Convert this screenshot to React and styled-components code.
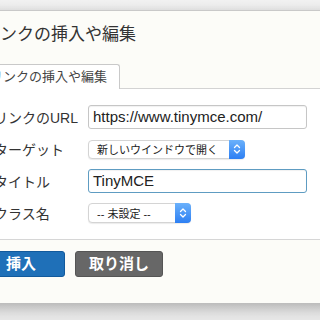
import React from "react";
import styled, { createGlobalStyle } from "styled-components";

const Global = createGlobalStyle`
    html, body {
        margin: 0;
        padding: 0;
        background: #efefef;
        overflow: hidden;
    }
    #root {
        width: 320px;
        height: 320px;
        overflow: hidden;
        background: linear-gradient(to bottom, #f3f3f3, #e9e9e9);
    }
`;

const font = `"Liberation Sans", "Noto Sans CJK JP", sans-serif`;

const Dialog = styled.div`
    margin: 10px 0 0 -30px;
    width: 380px;
    background: #fcfcf8;
    border-top: 1px solid #c9c9c9;
    box-shadow: 0 4px 14px rgba(0, 0, 0, 0.28);
    font-family: ${font};
    color: #333;
`;

const Title = styled.div`
    padding: 13px 0 0 13px;
    height: 40px;
    font-size: 17px;
    line-height: 22px;
    box-sizing: border-box;
`;

const TabBar = styled.div`
    display: flex;
    margin-top: 13px;
    padding-left: 7px;
    border-bottom: 1px solid #d3d3d3;
`;

const Tab = styled.div`
    margin-bottom: -1px;
    padding: 0 12px;
    height: 25px;
    line-height: 24px;
    font-size: 13px;
    color: #444;
    background: #fff;
    border: 1px solid #c9c9c9;
    border-bottom: none;
    border-radius: 3px 3px 0 0;
    box-sizing: border-box;
`;

const Body = styled.div`
    background: #fff;
    padding: 16px 0 14px 24px;
    display: flex;
    flex-direction: column;
    gap: 8px;
`;

const Row = styled.div`
    display: grid;
    grid-template-columns: 94px 1fr;
    align-items: center;
    height: 24px;
`;

const Label = styled.div`
    font-size: 14px;
    color: #333;
`;

const Input = styled.div`
    width: 219px;
    height: 24px;
    box-sizing: border-box;
    border: 1px solid ${({ focus }) => (focus ? "#5e9cc2" : "#c6c6c6")};
    border-radius: 3px;
    padding: 0 4px;
    font-size: 15px;
    line-height: 22px;
    color: #222;
    box-shadow: inset 0 1px 1px rgba(0, 0, 0, 0.06);
    white-space: nowrap;
`;

const Select = styled.div`
    position: relative;
    width: ${({ w }) => w}px;
    height: ${({ h }) => h}px;
    box-sizing: border-box;
    border: 1px solid #d4d4d4;
    border-radius: 4px;
    background: #fff;
    box-shadow: 0 1px 1px rgba(0, 0, 0, 0.08);
    display: flex;
    align-items: center;
    padding-left: 8px;
    font-size: 11px;
    color: #222;
    white-space: nowrap;
`;

const Arrow = styled.div`
    position: absolute;
    top: -1px;
    right: -1px;
    bottom: -1px;
    width: 16px;
    border-radius: 0 4px 4px 0;
    background: linear-gradient(to bottom, #6bb1fb, #2d7ff3);
    display: flex;
    align-items: center;
    justify-content: center;
`;

const Foot = styled.div`
    border-top: 1px solid #d6d6d6;
    padding: 11px 0 26px 7px;
    display: flex;
    gap: 10px;
`;

const Button = styled.div`
    width: 88px;
    height: 26px;
    box-sizing: border-box;
    border-radius: 3px;
    border: 1px solid ${({ primary }) => (primary ? "#125a9c" : "#555")};
    background: ${({ primary }) => (primary ? "#1f70b8" : "#676767")};
    color: #fff;
    font-weight: bold;
    font-size: 15px;
    line-height: 24px;
    text-align: center;
`;

const Chevrons = () => (
    <svg width="8" height="12" viewBox="0 0 8 12">
        <path d="M1.5 4.5 L4 2 L6.5 4.5 M1.5 7.5 L4 10 L6.5 7.5" fill="none" stroke="#fff" strokeWidth="1.3" strokeLinecap="round" strokeLinejoin="round" />
    </svg>
);

export default function App() {
    return (
        <>
            <Global />
            <Dialog>
                <Title>リンクの挿入や編集</Title>
                <TabBar>
                    <Tab>リンクの挿入や編集</Tab>
                </TabBar>
                <Body>
                    <Row>
                        <Label>リンクのURL</Label>
                        <Input>https://www.tinymce.com/</Input>
                    </Row>
                    <Row>
                        <Label>ターゲット</Label>
                        <Select w={157} h={19}>
                            新しいウインドウで開く
                            <Arrow>
                                <Chevrons />
                            </Arrow>
                        </Select>
                    </Row>
                    <Row>
                        <Label>タイトル</Label>
                        <Input focus>TinyMCE</Input>
                    </Row>
                    <Row>
                        <Label>クラス名</Label>
                        <Select w={103} h={20}>
                            -- 未設定 --
                            <Arrow>
                                <Chevrons />
                            </Arrow>
                        </Select>
                    </Row>
                </Body>
                <Foot>
                    <Button primary>挿入</Button>
                    <Button>取り消し</Button>
                </Foot>
            </Dialog>
        </>
    );
}
